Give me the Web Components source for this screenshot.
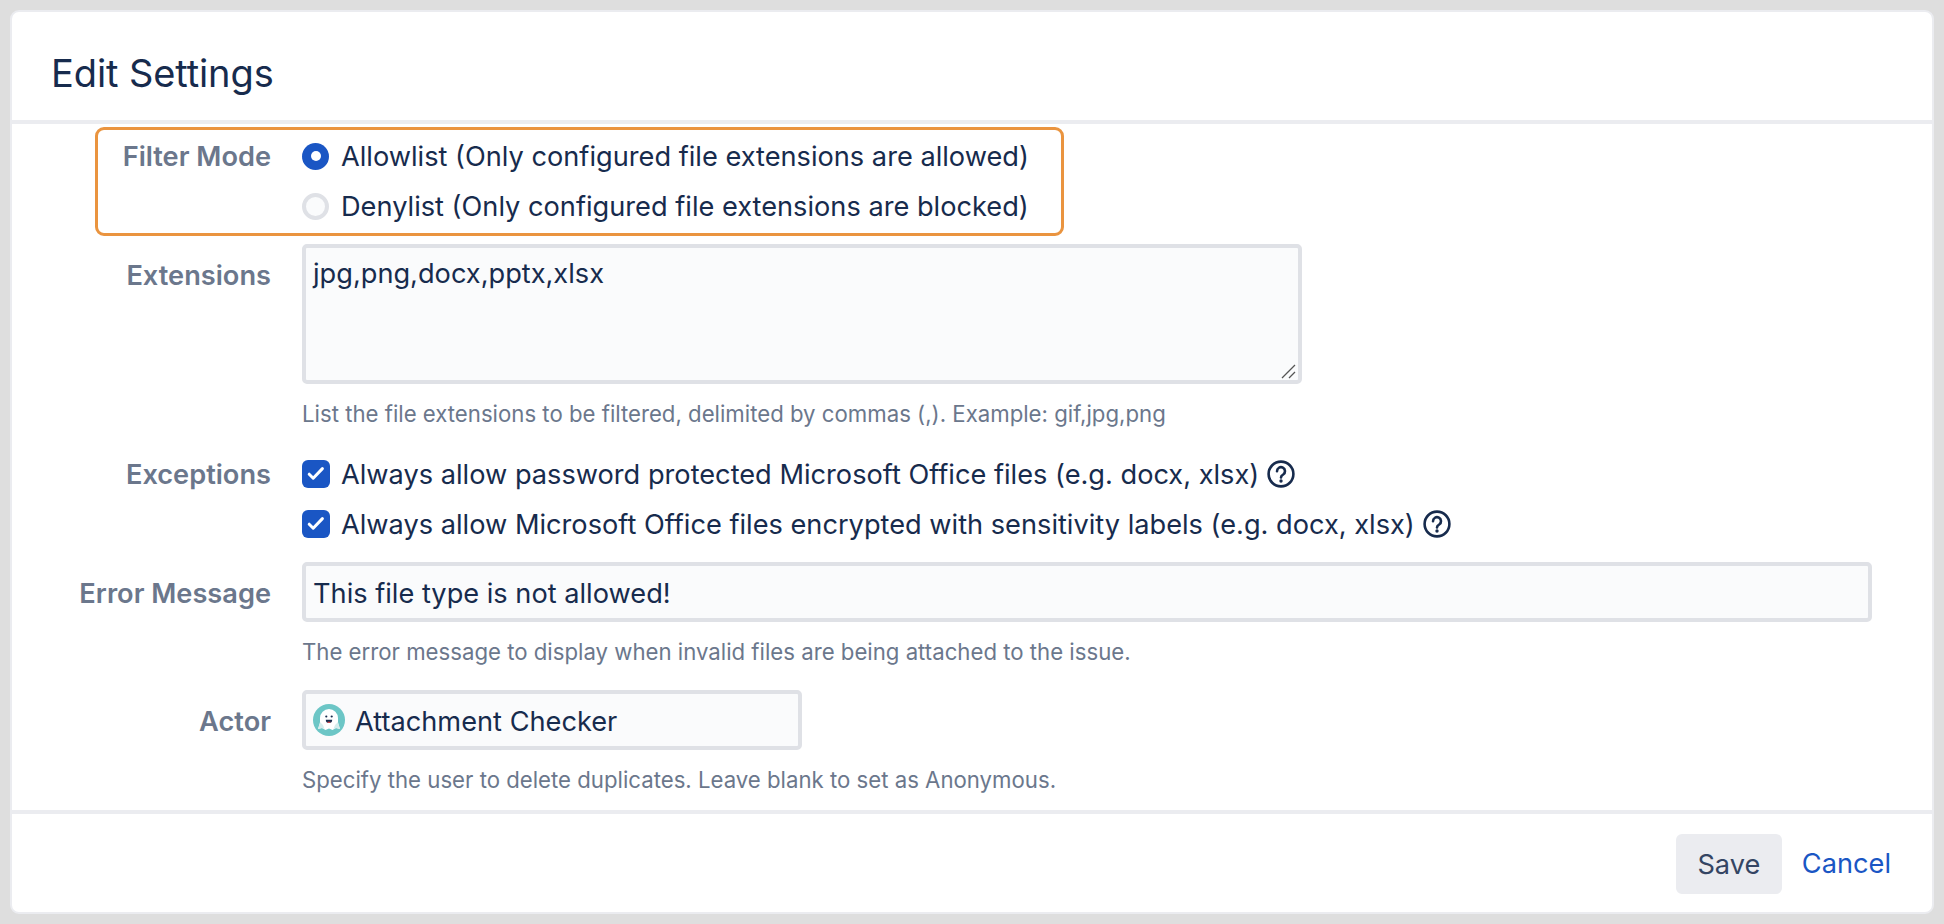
<!DOCTYPE html>
<html>
<head>
<meta charset="utf-8">
<title>Edit Settings</title>
<style>
  html, body { margin: 0; height: 100%; }
  body {
    background: #dedede;
    font-family: Inter, "Liberation Sans", sans-serif;
    color: #172b4d;
  }
</style>
</head>
<body>
<settings-dialog heading="Edit Settings">
  <settings-form>
    <highlight-box></highlight-box>

    <field-row label="Filter Mode">
      <choice-option type="radio" checked>Allowlist (Only configured file extensions are allowed)</choice-option>
      <choice-option type="radio">Denylist (Only configured file extensions are blocked)</choice-option>
    </field-row>

    <field-row label="Extensions" inset style="margin-top:13px">
      <text-box multiline>jpg,png,docx,pptx,xlsx</text-box>
      <hint-text>List the file extensions to be filtered, delimited by commas (,). Example: gif,jpg,png</hint-text>
    </field-row>

    <field-row label="Exceptions" style="margin-top:18px">
      <choice-option type="checkbox" checked help>Always allow password protected Microsoft Office files (e.g. docx, xlsx)</choice-option>
      <choice-option type="checkbox" checked help>Always allow Microsoft Office files encrypted with sensitivity labels (e.g. docx, xlsx)</choice-option>
    </field-row>

    <field-row label="Error Message" inset style="margin-top:13px">
      <text-box>This file type is not allowed!</text-box>
      <hint-text>The error message to display when invalid files are being attached to the issue.</hint-text>
    </field-row>

    <field-row label="Actor" inset style="margin-top:21px">
      <text-box narrow><ghost-avatar slot="before"></ghost-avatar>Attachment Checker</text-box>
      <hint-text>Specify the user to delete duplicates. Leave blank to set as Anonymous.</hint-text>
    </field-row>
  </settings-form>
</settings-dialog>

<script>
// --- Dialog shell --- //
class SettingsDialog extends HTMLElement {
  constructor() {
    super();
    this.attachShadow({ mode: 'open' });
  }
  connectedCallback() {
    this.shadowRoot.innerHTML = `
      <style>
        :host { display: block; box-sizing: border-box; height: 100%; padding: 10px; }
        .card {
          box-sizing: border-box; height: 904px;
          display: flex; flex-direction: column;
          background: #fff; border: 2px solid #ebecf0; border-radius: 9px;
        }
        header {
          height: 112px; flex: none; box-sizing: border-box;
          border-bottom: 4px solid #ebecf0;
          display: flex; align-items: center; padding: 14px 0 0 39px;
        }
        h1 { margin: 0; font-size: 38px; font-weight: 400; letter-spacing: -0.1px; color: #172b4d; }
        main { flex: 1; }
        footer {
          border-top: 4px solid #ebecf0; flex: none; height: 102px; box-sizing: border-box;
          display: flex; justify-content: flex-end; align-items: flex-start; gap: 20px;
          padding: 20px 41px 0 0;
        }
        .save {
          width: 106px; height: 60px; border-radius: 6px; background: #ebecf0;
          display: flex; align-items: center; justify-content: center;
          color: #344563; font-size: 27.2px;
        }
        .cancel { line-height: 60px; color: #1a56c4; font-size: 27.2px; }
      </style>
      <div class="card">
        <header><h1>${this.getAttribute('heading')}</h1></header>
        <main><slot></slot></main>
        <footer><div class="save">Save</div><div class="cancel">Cancel</div></footer>
      </div>`;
  }
}

class SettingsForm extends HTMLElement {
  constructor() {
    super();
    this.attachShadow({ mode: 'open' }).innerHTML = `
      <style>
        :host { display: block; position: relative; padding-top: 7px; }
      </style>
      <slot></slot>`;
  }
}

// orange call-out drawn over the first row
class HighlightBox extends HTMLElement {
  constructor() {
    super();
    this.attachShadow({ mode: 'open' }).innerHTML = `
      <style>
        :host {
          position: absolute; left: 83px; top: 3px; width: 969px; height: 109px;
          box-sizing: border-box; border: 3px solid #ea943f; border-radius: 9px;
          pointer-events: none;
        }
      </style>`;
  }
}

// --- Form row: right aligned label + control column --- //
class FieldRow extends HTMLElement {
  constructor() {
    super();
    this.attachShadow({ mode: 'open' });
  }
  connectedCallback() {
    const pad = this.hasAttribute('inset') ? 7 : 1;
    this.shadowRoot.innerHTML = `
      <style>
        :host { display: grid; grid-template-columns: 259px 1fr; column-gap: 31px; padding-right: 60px; }
        .label {
          text-align: right; color: #6b778c; font-size: 27.2px; font-weight: 600;
          line-height: 50px; padding-top: ${pad}px;
        }
        .control { min-width: 0; }
      </style>
      <div class="label">${this.getAttribute('label')}</div>
      <div class="control"><slot></slot></div>`;
  }
}

// --- Radio / checkbox with label --- //
class ChoiceOption extends HTMLElement {
  constructor() {
    super();
    this.attachShadow({ mode: 'open' });
  }
  connectedCallback() {
    const isRadio = this.getAttribute('type') === 'radio';
    const checked = this.hasAttribute('checked');
    const mark = isRadio
      ? (checked ? '<span class="dot"></span>' : '')
      : `<svg width="28" height="28" viewBox="0 0 28 28"><path d="M7.2 14.2l4 4 9.2-9.6" fill="none" stroke="#fff" stroke-width="3" stroke-linecap="round" stroke-linejoin="round"/></svg>`;
    const help = this.hasAttribute('help') ? '<help-icon></help-icon>' : '';
    this.shadowRoot.innerHTML = `
      <style>
        :host { display: flex; align-items: center; height: 50px; font-size: 27.2px; color: #172b4d; }
        .box {
          flex: none; box-sizing: border-box; width: 28px; height: 28px;
          display: flex; align-items: center; justify-content: center;
          margin-right: 11px;
        }
        .box.radio { border-radius: 50%; width: 27px; height: 27px; margin-right: 12px; }
        .box.check { border-radius: 6px; }
        .box.on { background: #1a56c4; }
        .box.off { background: #fafbfc; border: 4px solid #dfe1e6; }
        .dot { width: 10px; height: 10px; border-radius: 50%; background: #fff; }
        help-icon { margin-left: 8px; }
      </style>
      <span class="box ${isRadio ? 'radio' : 'check'} ${checked ? 'on' : 'off'}">${mark}</span>
      <span><slot></slot></span>${help}`;
  }
}

class HelpIcon extends HTMLElement {
  constructor() {
    super();
    this.attachShadow({ mode: 'open' }).innerHTML = `
      <style>:host { display: inline-flex; flex: none; width: 28px; height: 28px; }</style>
      <svg width="28" height="28" viewBox="0 0 28 28" fill="none">
        <circle cx="14" cy="14" r="12.4" stroke="#172b4d" stroke-width="2.6"/>
        <path d="M10 11.2a4 4 0 1 1 6.2 3.3c-1.5.9-2.2 1.5-2.2 2.9" stroke="#172b4d" stroke-width="2.6" stroke-linecap="round"/>
        <circle cx="14" cy="21" r="1.7" fill="#172b4d"/>
      </svg>`;
  }
}

// --- Text field look-alike: keeps its value as real text --- //
class TextBox extends HTMLElement {
  constructor() {
    super();
    this.attachShadow({ mode: 'open' });
  }
  connectedCallback() {
    const multi = this.hasAttribute('multiline');
    const grip = multi
      ? `<svg class="grip" width="16" height="16" viewBox="0 0 16 16" fill="none" stroke="#555" stroke-width="1.3"><path d="M1 15L14 2M8 15l6-6"/></svg>`
      : '';
    this.shadowRoot.innerHTML = `
      <style>
        :host {
          display: flex; position: relative; box-sizing: border-box;
          width: ${multi ? '1000px' : this.hasAttribute('narrow') ? '500px' : '100%'};
          height: ${multi ? '140px' : '60px'};
          align-items: ${multi ? 'flex-start' : 'center'};
          border: 4px solid #dfe1e6; border-radius: 5px; background: #fafbfc;
          padding: ${multi ? '8px 7px' : '0 7px'};
          font-size: 27.2px; color: #172b4d; line-height: 36px;
          gap: 10px;
        }
        .value { ${multi ? '' : 'padding-top: 3px;'} }
        .grip { position: absolute; right: 1px; bottom: 1px; }
      </style>
      <slot name="before"></slot><span class="value"><slot></slot></span>${grip}`;
  }
}

class HintText extends HTMLElement {
  constructor() {
    super();
    this.attachShadow({ mode: 'open' }).innerHTML = `
      <style>
        :host { display: block; margin-top: 13px; font-size: 22.2px; line-height: 34px; color: #6b778c; }
      </style>
      <slot></slot>`;
  }
}

class GhostAvatar extends HTMLElement {
  constructor() {
    super();
    this.attachShadow({ mode: 'open' }).innerHTML = `
      <style>:host { display: inline-flex; flex: none; width: 32px; height: 32px; }</style>
      <svg width="32" height="32" viewBox="0 0 32 32">
        <circle cx="16" cy="16" r="16" fill="#6cc6c6"/>
        <path d="M7 14a9 9 0 0 1 18 0v5l2 6-4-1-3.500 2-3.500-1.500-3.500 1.500-3.500-2-4 1 2-6z" fill="#fff"/>
        <path d="M7 18l3 3 1.500 4-2.500-1-4 1z" fill="#d5eded"/>
        <path d="M25 18l-3 3-1.500 4 2.500-1 4 1z" fill="#d5eded"/>
        <circle cx="13.300" cy="12.500" r="1.100" fill="#172b4d"/>
        <circle cx="18.700" cy="12.500" r="1.100" fill="#172b4d"/>
        <path d="M12.800 15.800h6.400a3.200 3.200 0 0 1-6.400 0z" fill="#172b4d"/>
        <path d="M14.400 17.700h3.200a1.600 1.300 0 0 1-3.200 0z" fill="#e5484d"/>
      </svg>`;
  }
}

customElements.define('settings-dialog', SettingsDialog);
customElements.define('settings-form', SettingsForm);
customElements.define('highlight-box', HighlightBox);
customElements.define('field-row', FieldRow);
customElements.define('choice-option', ChoiceOption);
customElements.define('help-icon', HelpIcon);
customElements.define('text-box', TextBox);
customElements.define('hint-text', HintText);
customElements.define('ghost-avatar', GhostAvatar);
</script>
</body>
</html>
